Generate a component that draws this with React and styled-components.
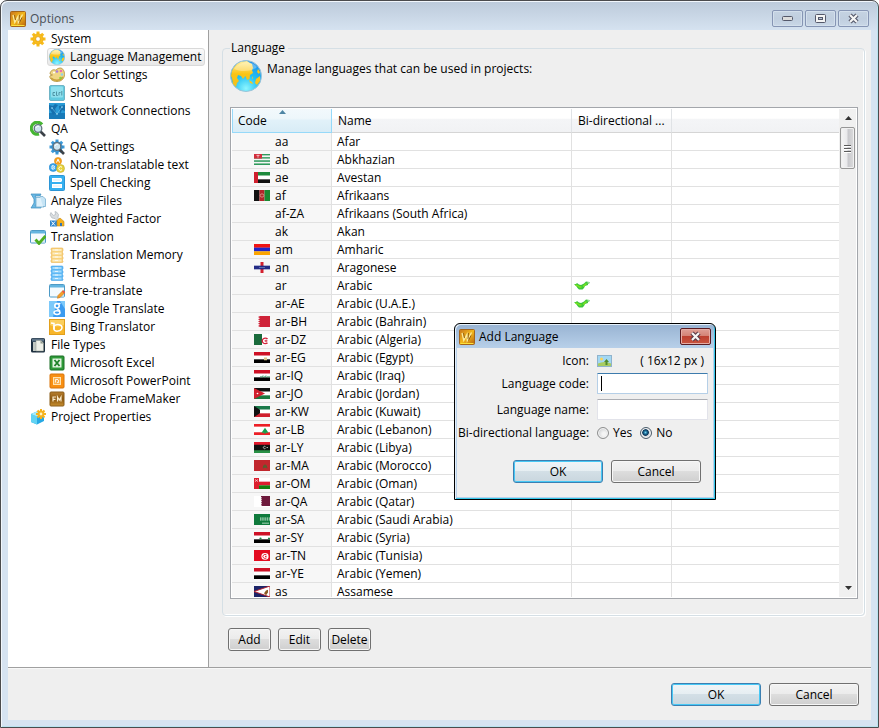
import React from 'react';
import styled, { createGlobalStyle, css } from 'styled-components';

const GlobalStyle = createGlobalStyle`
  *, *::before, *::after { box-sizing: border-box; }
  html, body, #root { height: 100%; margin: 0; }
  body { background: #ffffff; }
  body, button, input, table { font-family: "Open Sans", "Noto Sans", sans-serif; font-size: 12px; line-height: 16px; color: #000000; }
`;

/* ---------- window ---------- */

const Window = styled.div`
  display: flex;
  flex-direction: column;
  height: 100vh;
  min-height: 728px;
  padding: 0 7px 7px;
  border: 1px solid #4b4b4d;
  border-radius: 7px 7px 0 0;
  background: linear-gradient(#bccada 0, #d6e3f1 30px, #d6e3f1 100%);
  box-shadow: inset 1px 1px 0 #f2f7fc, inset -1px -1px 0 #b9e3ef;
`;

const TitleBar = styled.header`
  display: flex;
  align-items: center;
  gap: 4px;
  flex: none;
  height: 29px;
  padding: 6px 0 0 2px;
`;

const WindowTitle = styled.h1`
  flex: 1;
  margin: 0;
  font-size: 12px;
  font-weight: 400;
  color: #4a5158;
`;

const CaptionButtons = styled.div`
  display: flex;
  gap: 2px;
  align-items: center;
  padding-right: 2px;
`;

const CaptionButton = styled.button`
  display: flex;
  align-items: center;
  justify-content: center;
  width: 31px;
  height: 17px;
  padding: 0;
  border: 1px solid #8695b4;
  border-radius: 2px;
  background: linear-gradient(#c5d3e2, #c0cedf 50%, #c9d7e6);
  box-shadow: inset 0 0 0 1px #d3dfec;
`;

const Client = styled.div`
  display: flex;
  flex-direction: column;
  flex: 1;
  min-height: 0;
  background: #efefef;
`;

const Workspace = styled.div`
  display: flex;
  flex: 1;
  min-height: 0;
  border-bottom: 1px solid #a0a0a0;
`;

/* ---------- tree ---------- */

const Sidebar = styled.nav`
  flex: none;
  width: 201px;
  border-right: 1px solid #a0a0a0;
  background: #ffffff;
`;

const Tree = styled.ul`
  margin: 0;
  padding: 0;
  list-style: none;
`;

const TreeItem = styled.li`
  display: flex;
  padding-left: ${(p) => (p.$level ? 39 : 20)}px;
`;

const TreeLink = styled.a`
  display: flex;
  align-items: center;
  gap: 5px;
  height: 18px;
  padding: 0 3px 0 1px;
  border: 1px solid transparent;
  border-radius: 3px;
  color: #000000;
  text-decoration: none;
  white-space: nowrap;
  ${(p) => p.$selected && css`
    border-color: #d9d9d9;
    background: linear-gradient(#fafafa, #e8e8e8);
  `}
`;

/* ---------- main panel ---------- */

const Main = styled.main`
  display: flex;
  flex-direction: column;
  flex: 1;
  min-width: 0;
  padding: 10px 6px 16px 13px;
`;

const Group = styled.fieldset`
  display: flex;
  flex-direction: column;
  flex: 1;
  min-height: 0;
  min-width: 0;
  margin: 0;
  padding: 4px 6px 16px 7px;
  border: 1px solid #d5dfe5;
  border-radius: 4px;
  box-shadow: inset -1px -1px 0 #ffffff, 1px 1px 0 #ffffff;
`;

const Legend = styled.legend`
  height: 16px;
  padding: 0 3px 0 1px;
`;

const Intro = styled.div`
  display: flex;
  gap: 5px;
  height: 47px;
`;

const IntroText = styled.p`
  margin: 1px 0 0;
`;

const ListFrame = styled.div`
  display: flex;
  flex: 1;
  min-height: 0;
  padding: 1px;
  border: 1px solid #a3a6ab;
  background: #ffffff;
`;

const ListScroll = styled.div`
  flex: 1;
  min-width: 0;
  overflow: hidden;
`;

const Table = styled.table`
  width: 100%;
  table-layout: fixed;
  border-collapse: separate;
  border-spacing: 0;
`;

const Col = styled.col`
  width: ${(p) => p.$width || 'auto'};
`;

const HeadCell = styled.th`
  position: relative;
  height: 24px;
  padding: 0 6px;
  border-right: 1px solid #e0e3e6;
  border-bottom: 1px solid #d5d5d5;
  background: linear-gradient(#ffffff 0, #ffffff 40%, #f4f5f7 45%, #f1f2f4 100%);
  font-weight: 400;
  text-align: left;
  white-space: nowrap;
  overflow: hidden;
  ${(p) => p.$sorted && css`
    border: 1px solid #96d9f9;
    border-top: 0;
    padding-left: 5px;
    background: linear-gradient(#f2f9fc 0, #eef7fb 40%, #e1f1f9 50%, #d8ecf6 100%);
  `}
  ${(p) => p.$last && css`border-right: 0;`}
`;

const SortArrow = styled.svg`
  position: absolute;
  top: 1px;
  left: calc(50% - 3px);
`;

const Cell = styled.td`
  height: 18px;
  padding: 0 5px;
  border-right: 1px solid #e1e1e1;
  border-bottom: 1px solid #e1e1e1;
  line-height: 14px;
  white-space: nowrap;
  ${(p) => p.$last && css`border-right: 0;`}
`;

const CodeCell = styled(Cell)`
  background: #f7f7f7;
  padding: 0 0 0 22px;
`;

const FlagCell = styled(Cell)`
  padding: 0 2px;
`;

const CodeContent = styled.div`
  display: grid;
  grid-template-columns: 16px 1fr;
  gap: 5px;
  align-items: center;
  height: 17px;
`;

const CheckBox = styled.div`
  display: flex;
  align-items: center;
  height: 17px;
`;

const ScrollBar = styled.div`
  display: flex;
  flex-direction: column;
  flex: none;
  width: 17px;
  padding-left: 1px;
  background: #f0f0f0;
`;

const ScrollArrow = styled.button`
  display: flex;
  align-items: center;
  justify-content: center;
  flex: none;
  height: 18px;
  padding: 0;
  border: 0;
  background: transparent;
`;

const ScrollTrack = styled.div`
  flex: 1;
`;

const ScrollThumb = styled.div`
  display: flex;
  align-items: center;
  justify-content: center;
  width: 15px;
  height: 42px;
  border: 1px solid #979797;
  border-radius: 2px;
  background: linear-gradient(90deg, #f5f5f5 0, #e9e9eb 45%, #c8c8cc 55%, #dcdcdd 100%);
  box-shadow: inset 0 0 0 1px #f0f0f0;
`;

/* ---------- buttons ---------- */

const Button = styled.button`
  flex: none;
  width: ${(p) => (p.$small ? 43 : 90)}px;
  height: 23px;
  padding: 0;
  border: 1px solid #707070;
  border-radius: 3px;
  background: linear-gradient(#f2f2f2 0, #ebebeb 48%, #dddddd 50%, #cfcfcf 100%);
  box-shadow: inset 0 0 0 1px #f7f7f7;
  white-space: nowrap;
  ${(p) => p.$primary && css`
    border-color: #3c7fb1;
    background: linear-gradient(#f0f4f7 0, #e6eef2 48%, #d3dfe6 50%, #c9d6de 100%);
    box-shadow: inset 0 0 0 1px #47c8f5;
  `}
`;

const Actions = styled.div`
  display: flex;
  gap: 7px;
  padding: 12px 0 0 6px;
`;

const Footer = styled.footer`
  display: flex;
  justify-content: flex-end;
  gap: 8px;
  flex: none;
  padding: 14px 12px;
  border-top: 1px solid #f8f8f8;
`;

/* ---------- dialog ---------- */

const Dialog = styled.section`
  position: absolute;
  top: 323px;
  left: 454px;
  width: 262px;
  padding: 1px 2px 2px;
  border: 1px solid #000000;
  border-radius: 6px 6px 0 0;
  background: linear-gradient(#98b3d2 0, #b9d1ea 25px, #b9d1ea 100%);
  box-shadow: inset 1px 1px 0 #e5f0fa, inset -1px -1px 0 #35c8ea;
`;

const DialogTitleBar = styled.header`
  display: flex;
  align-items: center;
  gap: 4px;
  height: 23px;
  padding: 0 2px;
`;

const DialogTitle = styled.h2`
  flex: 1;
  margin: 0;
  font-size: 12px;
  font-weight: 400;
`;

const DialogClose = styled.button`
  display: flex;
  align-items: center;
  justify-content: center;
  width: 31px;
  height: 17px;
  padding: 0;
  border: 1px solid #5b1c22;
  border-radius: 2px;
  background: linear-gradient(#dfa097 0, #d48376 45%, #bd4131 50%, #c9543f 100%);
  box-shadow: inset 0 0 0 1px #e5aca4;
`;

const DialogBody = styled.form`
  padding: 4px 5px 14px 1px;
  background: #efefef;
`;

const Fields = styled.div`
  display: grid;
  grid-template-columns: 131px 1fr;
  grid-template-rows: 18px 27px 25px 22px;
  column-gap: 8px;
  align-items: center;
`;

const FieldLabel = styled.label`
  text-align: right;
  white-space: nowrap;
`;

const IconRow = styled.div`
  display: flex;
  align-items: center;
  justify-content: space-between;
  padding-right: 4px;
`;

const IconPicker = styled.button`
  display: flex;
  padding: 0;
  border: 0;
  background: transparent;
`;

const TextInput = styled.input`
  width: 100%;
  height: 21px;
  padding: 1px 3px;
  border: 1px solid #e2e3ea;
  border-top-color: #abadb3;
  border-radius: 1px;
  background: #ffffff;
  outline: 0;
  caret-color: transparent;
`;

const InputBox = styled.div`
  display: grid;
  align-items: center;
  > * { grid-area: 1 / 1; }
  ${(p) => p.$focused && css`
    ${TextInput} {
      border-color: #b5cfe7;
      border-top-color: #3d7bad;
    }
  `}
`;

const Caret = styled.span`
  z-index: 1;
  width: 1px;
  height: 15px;
  margin-left: 4px;
  background: #000000;
`;

const RadioRow = styled.div`
  display: flex;
  gap: 8px;
`;

const RadioLabel = styled.label`
  display: flex;
  align-items: center;
  gap: 4px;
`;

const Radio = styled.input`
  appearance: none;
  width: 12px;
  height: 12px;
  margin: 0;
  border: 1px solid #8e8f8f;
  border-radius: 50%;
  background: radial-gradient(circle at 60% 60%, #f4f4f4 20%, #cfd1d3 75%);
  box-shadow: inset 0 0 0 1px #f4f4f4;
  &:checked {
    border-color: #4b5c6b;
    background: radial-gradient(circle at 45% 45%, #6fd0ee 0, #17648f 22%, #0b3557 38%, #d8dde2 48%);
  }
`;

const DialogActions = styled.div`
  display: flex;
  justify-content: flex-end;
  gap: 8px;
  padding: 16px 7px 0 0;
`;

/* ---------- icons ---------- */

const Svg16 = ({ children, size = 16 }) => (
  <svg width={size} height={size} viewBox="0 0 16 16" aria-hidden="true">{children}</svg>
);

const AppIcon = () => (
  <Svg16>
    <defs>
      <linearGradient id="app-g" x1="0" y1="0" x2="1" y2="1">
        <stop offset="0" stopColor="#c8741c" /><stop offset=".5" stopColor="#f2b81c" /><stop offset="1" stopColor="#b8620e" />
      </linearGradient>
    </defs>
    <rect x=".5" y=".5" width="15" height="15" rx="1" fill="url(#app-g)" stroke="#a5651a" />
    <path d="M1.500 14.500h13" stroke="#fbe23c" />
    <path d="M3 4l1.800 7.500L8 5.500l.300 6L12.500 3.500" fill="none" stroke="#fbe9a0" strokeWidth="1.300" />
    <path d="M4.500 4l1 5M9.500 4l-.5 6M12 6.500l-2.500 5" fill="none" stroke="#8c5a14" strokeWidth=".9" />
  </Svg16>
);

const Globe = ({ size = 16 }) => (
  <svg width={size} height={size} viewBox="0 0 32 32" aria-hidden="true">
    <defs>
      <radialGradient id="globe-g" cx=".5" cy=".9" r=".95">
        <stop offset="0" stopColor="#8df6ff" /><stop offset=".45" stopColor="#22c0f2" /><stop offset="1" stopColor="#1b86ea" />
      </radialGradient>
      <linearGradient id="land-g" x1="0" y1="0" x2="0" y2="1">
        <stop offset="0" stopColor="#fff0a0" /><stop offset=".5" stopColor="#fbc414" /><stop offset="1" stopColor="#f0c020" />
      </linearGradient>
    </defs>
    <circle cx="16" cy="16" r="15.500" fill="url(#globe-g)" stroke="#9cc3d8" />
    <path d="M2 11C4 6 8 2 13 1.500l4-.5 3 2 2 1 1 4-1 2 1 3-3 2-.5 4L17 20l-1.500-4L13 19l-2-3-3-1-1 3 2 3-2 2-1 4-3-3-1-6-1-2z" fill="url(#land-g)" />
    <path d="M26 19l4-3v5l-3 4-2-2zM19 20l3 2 1 2-3-1zM28 9l2 3-1 2-2-2zM22 16l1 2-1 1z" fill="#fbc51a" />
    <path d="M4 9C9 1 22 0 27 7 22 12 10 12 4 9z" fill="#fff" opacity=".3" />
  </svg>
);

const Gear = ({ fill, stroke, hole }) => (
  <>
    <g stroke={fill} strokeWidth="3">
      <path d="M8 .5v15M.5 8h15M2.800 2.800l10.400 10.400M13.200 2.800L2.800 13.200" />
    </g>
    <circle cx="8" cy="8" r="5.300" fill={fill} stroke={stroke} strokeWidth=".4" />
    <circle cx="8" cy="8" r="2.400" fill={hole} stroke={stroke} strokeWidth=".8" />
  </>
);

const Magnifier = () => (
  <>
    <path d="M10.500 10.500l4.500 4.500" stroke="#3b4148" strokeWidth="2.600" />
    <circle cx="8" cy="7.500" r="3.800" fill="#cfe5f0" stroke="#62717c" strokeWidth="1.300" />
    <path d="M6 7a2.400 2.400 0 0 1 3-1.800" fill="none" stroke="#fff" />
  </>
);

const Database = ({ light, mid, dark }) => (
  <Svg16>
    <path d="M2.500 1h11l.5 1v2l-1 1 1 1v2l-1 1 1 1v2l-1 1 1 1v1l-.5.500h-11L2 15v-2l1-1-1-1V9l1-1-1-1V5l1-1-1-1V2z" fill={mid} stroke={dark} strokeWidth=".6" />
    <path d="M3.500 3h9M3.500 6.500h9M3.500 10h9M3.500 13.500h9" stroke={light} strokeWidth="1.800" />
    <path d="M6 3h3M6 6.500h3M6 10h3M6 13.500h3" stroke="#fff" opacity=".7" />
  </Svg16>
);

const AppWindow = () => (
  <>
    <rect x=".5" y="1.500" width="15" height="12.500" rx="1" fill="#f4fafe" stroke="#4d9ac6" />
    <path d="M1 2h14v2.500H1z" fill="#63b5e0" />
    <path d="M3 13h10l2-6v6.500z" fill="#cfe8f6" />
  </>
);

const icons = {
  system: (
    <Svg16><Gear fill="#f8bd1c" stroke="#e39c0c" hole="#ffffff" /></Svg16>
  ),
  globe: <Globe />,
  palette: (
    <Svg16>
      <path d="M1 7c0-3 3-5 5-4 1 1 2-2 5-2 3 0 4.500 3 4.500 6.500 0 4-3 7-7.500 7S1 12 .8 9.500C.7 8 3 9 3.500 8z" fill="#f0d684" stroke="#b08d35" strokeWidth=".8" />
      <path d="M2 11c3 3 9 3.500 12-1" fill="none" stroke="#c9a23c" strokeWidth="1.500" />
      <circle cx="8" cy="4.500" r="1.300" fill="#a77ad8" /><circle cx="12" cy="4" r="1.300" fill="#ee6fae" />
      <circle cx="13" cy="7.500" r="1.300" fill="#8fd0e8" /><circle cx="11.500" cy="11" r="1.300" fill="#8bd03c" /><circle cx="5" cy="5.500" r="1" fill="#fff" />
    </Svg16>
  ),
  shortcuts: (
    <Svg16>
      <rect x=".5" y=".5" width="15" height="15" rx="1.500" fill="#62cbe0" stroke="#6fb4c6" />
      <rect x="2" y="1.500" width="12" height="11" rx="1" fill="#8fe0ee" />
      <path d="M6 7.500H4v3h2M7.500 6.500v4h1.300M10 10.500v-3h1.500M12.800 6v4.500" fill="none" stroke="#4f95a6" strokeWidth="1" />
    </Svg16>
  ),
  network: (
    <Svg16>
      <rect width="16" height="16" fill="#2a9bd6" />
      <path d="M0 10h16v6H0z" fill="#187ab8" />
      <path d="M0 2l4 1 2-2 3 1-3 4 1 3-3 3-2-4-2-2zM10 3l6-1v6l-3-1-2 4z" fill="#1670ae" />
      <path d="M3 5l5 6 5-7" fill="none" stroke="#6cc4ec" strokeWidth=".6" />
      <circle cx="3" cy="5" r=".8" fill="#aee9fa" /><circle cx="8" cy="11" r=".8" fill="#aee9fa" /><circle cx="13" cy="4" r=".8" fill="#aee9fa" />
    </Svg16>
  ),
  qa: (
    <Svg16>
      <path d="M12 3.500A6 6 0 1 0 9 13" fill="none" stroke="#46b534" strokeWidth="3.200" />
      <Magnifier />
    </Svg16>
  ),
  qaSettings: (
    <Svg16><Gear fill="#3d9ad8" stroke="#2475b4" hole="#bfe2f3" /><Magnifier /></Svg16>
  ),
  nonTranslatable: (
    <Svg16>
      <circle cx="9" cy="4" r="3.600" fill="#f9a11c" stroke="#d9820c" strokeWidth=".5" />
      <circle cx="4.200" cy="10.500" r="4" fill="#39a5ea" stroke="#1b7fc6" strokeWidth=".5" />
      <circle cx="11.500" cy="11.500" r="4" fill="#e6d23c" stroke="#b5a225" strokeWidth=".5" />
      <path d="M7.500 5.500L9 2.200l1.500 3.300M3 12V8.800h1.500c1.500 0 1 1.400 0 1.500 1.500.1 1.600 1.700 0 1.700zM13 10.300a1.800 1.800 0 1 0 0 2.400" fill="none" stroke="#fff" />
    </Svg16>
  ),
  spell: (
    <Svg16>
      <rect x=".5" y=".5" width="15" height="15" rx="1" fill="#35b0f0" stroke="#2b95d6" />
      <path d="M3 3h9l1 1v2l-1 1H3zM3 9h10v4H3z" fill="#fff" />
      <path d="M4 5h8M4 11h8" stroke="#d4edfa" />
    </Svg16>
  ),
  analyze: (
    <Svg16>
      <path d="M1 1h10l-1 2H5l2 3v4l-2 3h6v2H1l3-5V6z" fill="#6bb9e4" stroke="#3a8abb" strokeWidth=".7" />
      <path d="M6 4.500h5l3 2.500v7H6z" fill="#dff1fb" stroke="#74aed0" strokeWidth=".8" />
      <path d="M10 3.500h3l2.500 2.500v7.500H13" fill="#c6e4f5" stroke="#6aa8cc" strokeWidth=".7" />
    </Svg16>
  ),
  weighted: (
    <Svg16>
      <path d="M2 1.500L1 4l2 3 3 .5 5 5 2-2-4-4 .5-3L7.500 1 6 .500l.5 3-2 .8L3 3z" fill="#d9dde0" stroke="#a5adb3" strokeWidth=".6" />
      <path d="M1 9.500h7v6H1z" fill="#2f87cf" /><path d="M2.500 10.500l3.500 4M6 10.500l-3.500 4" stroke="#fff" />
      <path d="M8 15V9.500l3-2.500 4 3.500V15z" fill="#f6b21c" stroke="#c98a10" strokeWidth=".6" /><path d="M11 12h2v3h-2z" fill="#2f74b5" />
    </Svg16>
  ),
  translation: (
    <Svg16><AppWindow /><path d="M5.500 10.500l3.500 4 6.500-7.500" fill="none" stroke="#4faf22" strokeWidth="2.800" /></Svg16>
  ),
  memory: <Database light="#fdebbd" mid="#f8d27c" dark="#ecb655" />,
  termbase: <Database light="#a3dafc" mid="#5db8f5" dark="#4aa6ea" />,
  pretranslate: (
    <Svg16>
      <AppWindow />
      <path d="M9 12.500l5-5 2 2-5 5-2.500.800z" fill="#f6a02c" stroke="#c97512" strokeWidth=".6" /><path d="M13 8.500l1.200-1.300 2 2L15 10.500z" fill="#e2574a" />
    </Svg16>
  ),
  google: (
    <Svg16>
      <rect width="16" height="16" fill="#3b9bf0" /><path d="M0 0h8L4 16H0zM11 0h5v8z" fill="#7cc9fa" />
      <path d="M11.500 2.500H8.500" stroke="#fff" strokeWidth="1.300" />
      <ellipse cx="8" cy="4.800" rx="2.200" ry="2.200" fill="none" stroke="#fff" strokeWidth="1.600" />
      <path d="M8 7.500l3 2.500" stroke="#fff" strokeWidth="1.600" />
      <ellipse cx="8" cy="11.600" rx="3" ry="1.900" fill="none" stroke="#fff" strokeWidth="1.500" />
    </Svg16>
  ),
  bing: (
    <Svg16>
      <rect x=".5" y=".5" width="15" height="15" fill="#f8b62a" stroke="#e2a01c" />
      <path d="M1 1h14v5C10 8 5 8 1 6z" fill="#fbcf5e" />
      <path d="M2 4l3 .5v6" fill="none" stroke="#fff" strokeWidth="1.500" />
      <path d="M5 7c3-2.500 8-1.500 8 1.500 0 4-8 5-8 1.500z" fill="none" stroke="#fff" strokeWidth="1.500" />
    </Svg16>
  ),
  fileTypes: (
    <Svg16>
      <rect x="1" y="1" width="14" height="14.500" rx="1.500" fill="#1d2f3f" />
      <path d="M2 1.500h12v3H2z" fill="#5d7387" />
      <path d="M3 5h4v9H3z" fill="#c2c9c3" /><path d="M6 3.500h5l2.500 2.500v8H6z" fill="#eef0e8" stroke="#8c948c" strokeWidth=".5" /><path d="M10.500 3.500V6.500h3z" fill="#8d978c" />
    </Svg16>
  ),
  excel: (
    <Svg16>
      <rect x="1" y="1" width="14" height="14" rx="1" fill="#2f9a39" stroke="#1c6f27" />
      <rect x="3.500" y="3.500" width="9" height="9" fill="#e4f4e2" /><path d="M5.500 5l5 6M10.500 5l-5 6" stroke="#1f8229" strokeWidth="1.900" />
    </Svg16>
  ),
  powerpoint: (
    <Svg16>
      <rect x="1" y="1" width="14" height="14" rx="1" fill="#f88f12" stroke="#d8740a" />
      <rect x="4.500" y="4.500" width="7" height="7" fill="#fbb150" stroke="#ffe3b0" /><path d="M6.500 9.500v-3H9M9.500 7v2.500H8" fill="none" stroke="#fff" strokeWidth=".8" />
    </Svg16>
  ),
  framemaker: (
    <Svg16>
      <defs>
        <linearGradient id="fm-g" x1="0" y1="0" x2="0" y2="1">
          <stop offset="0" stopColor="#b9802f" /><stop offset=".5" stopColor="#8a560f" /><stop offset="1" stopColor="#c99030" />
        </linearGradient>
      </defs>
      <rect x="1" y="1" width="14" height="14" rx="1" fill="url(#fm-g)" stroke="#8a5c18" />
      <path d="M4 10.500V6h3M4 8.300h2.500M8.500 10.500V6l1.800 3L12 6v4.500" fill="none" stroke="#fbeccb" strokeWidth="1.200" />
    </Svg16>
  ),
  project: (
    <Svg16>
      <path d="M1 5l7-3 6 3v7l-7 3.500L1 13z" fill="#27a9e4" /><path d="M1 5l6 2.500v8L1 13z" fill="#62d3f3" /><path d="M1 5l7-3 6 3-7 2.500z" fill="#a6ecfb" />
      <g stroke="#f6b21c" strokeWidth="2"><path d="M11 0v10M6 5h10M7.500 1.500l7 7M14.500 1.500l-7 7" /></g>
      <circle cx="11" cy="5" r="3.400" fill="#f6b21c" /><circle cx="11" cy="5" r="1.400" fill="#fff3c4" />
    </Svg16>
  ),
};

const Check = () => (
  <svg width="16" height="9" viewBox="0 0 16 9" role="img" aria-label="Yes">
    <path d="M0 3h2l1-1 2 1.500 2 .5 3-1.500L12 .500l3.500.500v1L14 3v1l-3 1-1 2-1.500 1.500H5L3.500 7 2.500 5.500z" fill="#3cc73c" />
    <path d="M1.500 4l2 .5 2 1.500h2M9 5.500l3.500-3" fill="none" stroke="#7fe31c" strokeWidth="1.300" />
    <path d="M13.500 1h2v1.500h-2z" fill="#9adf9b" />
  </svg>
);

/* ---------- flags ---------- */

const Bands = ({ colors }) => colors.map((c, i) => (
  <rect key={i} y={(12 / colors.length) * i} width="16" height={12 / colors.length + 0.1} fill={c} />
));

const flags = {
  ab: <><Bands colors={['#2f9a5c', '#f4f4f4', '#2f9a5c', '#f4f4f4', '#2f9a5c', '#f4f4f4', '#2f9a5c']} /><rect width="8" height="5" fill="#d22d3c" /><path d="M4 1v3M2.500 1.500h3" stroke="#f3b9be" /></>,
  ae: <><Bands colors={['#1d8a3c', '#ffffff', '#111111']} /><rect width="4" height="12" fill="#d0202e" /></>,
  af: <><rect width="5.500" height="12" fill="#111" /><rect x="5.500" width="5" height="12" fill="#b4252b" /><rect x="10.500" width="5.500" height="12" fill="#1a8a32" /><circle cx="8" cy="6" r="1.800" fill="none" stroke="#d98f80" /></>,
  am: <Bands colors={['#f01414', '#2026c8', '#fba400']} />,
  an: <><rect width="16" height="12" fill="#f6f6f6" /><rect x="6.500" width="3" height="12" fill="#d4202e" /><rect y="4" width="16" height="4" fill="#232c86" /><path d="M5.500 6h5" stroke="#aab0d8" strokeDasharray="1 1" /></>,
  bh: <><rect width="16" height="12" fill="#f8f8f8" /><path d="M6 0h10v12H6L4 10.800 6 9.600 4 8.400 6 7.200 4 6l2-1.200L4 3.600l2-1.200L4 1.200z" fill="#cf2339" /></>,
  dz: <><rect width="8" height="12" fill="#1a6b3c" /><rect x="8" width="8" height="12" fill="#fff" /><path d="M13.500 5.500a3 3 0 1 0 0 4" fill="none" stroke="#d3233a" strokeWidth="1.400" /><path d="M10.500 7.500h3M12 6.300v2.600" stroke="#d3233a" /></>,
  eg: <><Bands colors={['#ce1126', '#ffffff', '#000000']} /><rect x="10" y="6" width="3" height="3" fill="#dcc68c" /></>,
  iq: <><Bands colors={['#ce1126', '#ffffff', '#000000']} /><path d="M6 7.500h3V6M10 7.500h2V6M13 7.500h3" fill="none" stroke="#3c9a6a" /></>,
  jo: <><Bands colors={['#111111', '#ffffff', '#1a7a40']} /><path d="M0 0l11 6L0 12z" fill="#d0202e" /><circle cx="3.500" cy="6" r=".9" fill="#fff" /></>,
  kw: <><Bands colors={['#1a7a4a', '#ffffff', '#d0202e']} /><path d="M0 0l6 4v4l-6 4z" fill="#111" /></>,
  lb: <><Bands colors={['#ec2027', '#ffffff', '#ffffff', '#ec2027']} /><path d="M11 4l3.500 5.500h-3V11h-1V9.500h-3z" fill="#14a04e" /></>,
  ly: <><rect width="16" height="12" fill="#111" /><rect width="16" height="3" fill="#e3182c" /><rect y="9" width="16" height="3" fill="#279045" /><path d="M11.500 5a1.300 1.300 0 1 0 0 2M12.500 6h1.500" fill="none" stroke="#ddd" strokeWidth=".8" /></>,
  ma: <><rect width="16" height="12" fill="#c1272d" /><path d="M11 5l2.200 3.800L9 6.600h4L9 8.800z" fill="none" stroke="#53622f" strokeWidth=".9" /></>,
  om: <><Bands colors={['#ffffff', '#dc1e2d', '#12800e']} /><rect width="5" height="12" fill="#dc1e2d" /><path d="M1 1.500l3 2.500M4 1.500L1 4" stroke="#f6c9cc" strokeWidth=".8" /></>,
  qa: <><rect width="16" height="12" fill="#fff" /><path d="M7 0h9v11H7l1-1-1-1 1-1-1-1 1-1-1-1 1-1-1-1 1-1-1-1z" fill="#6e1a3c" /></>,
  sa: <><rect width="16" height="12" fill="#0f7a3c" /><path d="M6 4.500h10M6 6.500h10" stroke="#b6dcc4" strokeWidth="1.300" strokeDasharray="1.500 .7" /><path d="M8 10h7" stroke="#d8eedf" strokeWidth=".8" /></>,
  sy: <><Bands colors={['#ce1126', '#ffffff', '#000000']} /><circle cx="6.500" cy="7" r="1.100" fill="#1f8548" /><circle cx="15" cy="7" r="1.100" fill="#1f8548" /></>,
  tn: <><rect width="16" height="12" fill="#e30b20" /><circle cx="11" cy="7" r="3.600" fill="#fff" /><path d="M12.500 5.300a2.200 2.200 0 1 0 0 3.400" fill="none" stroke="#e30b20" strokeWidth=".9" /><circle cx="11.800" cy="7" r=".8" fill="#e30b20" /></>,
  ye: <Bands colors={['#ce1126', '#ffffff', '#000000']} />,
  as: <><rect width="16" height="12" fill="#1c2468" /><path d="M16 0L0 6l16 6z" fill="#fff" stroke="#b8202c" /><path d="M10 8l2-3 2-1v3l-2 3z" fill="#8a5a22" /></>,
};

const Flag = ({ id }) => (
  <svg width="16" height="11" viewBox="0 0 16 12" preserveAspectRatio="none" aria-hidden="true">{flags[id]}</svg>
);

/* ---------- data ---------- */

const tree = [
  ['system', 'System', 0],
  ['globe', 'Language Management', 1],
  ['palette', 'Color Settings', 1],
  ['shortcuts', 'Shortcuts', 1],
  ['network', 'Network Connections', 1],
  ['qa', 'QA', 0],
  ['qaSettings', 'QA Settings', 1],
  ['nonTranslatable', 'Non-translatable text', 1],
  ['spell', 'Spell Checking', 1],
  ['analyze', 'Analyze Files', 0],
  ['weighted', 'Weighted Factor', 1],
  ['translation', 'Translation', 0],
  ['memory', 'Translation Memory', 1],
  ['termbase', 'Termbase', 1],
  ['pretranslate', 'Pre-translate', 1],
  ['google', 'Google Translate', 1],
  ['bing', 'Bing Translator', 1],
  ['fileTypes', 'File Types', 0],
  ['excel', 'Microsoft Excel', 1],
  ['powerpoint', 'Microsoft PowerPoint', 1],
  ['framemaker', 'Adobe FrameMaker', 1],
  ['project', 'Project Properties', 0],
];

const languages = [
  ['aa', 'Afar'],
  ['ab', 'Abkhazian', 'ab'],
  ['ae', 'Avestan', 'ae'],
  ['af', 'Afrikaans', 'af'],
  ['af-ZA', 'Afrikaans (South Africa)'],
  ['ak', 'Akan'],
  ['am', 'Amharic', 'am'],
  ['an', 'Aragonese', 'an'],
  ['ar', 'Arabic', null, true],
  ['ar-AE', 'Arabic (U.A.E.)', null, true],
  ['ar-BH', 'Arabic (Bahrain)', 'bh'],
  ['ar-DZ', 'Arabic (Algeria)', 'dz'],
  ['ar-EG', 'Arabic (Egypt)', 'eg'],
  ['ar-IQ', 'Arabic (Iraq)', 'iq'],
  ['ar-JO', 'Arabic (Jordan)', 'jo'],
  ['ar-KW', 'Arabic (Kuwait)', 'kw'],
  ['ar-LB', 'Arabic (Lebanon)', 'lb'],
  ['ar-LY', 'Arabic (Libya)', 'ly'],
  ['ar-MA', 'Arabic (Morocco)', 'ma'],
  ['ar-OM', 'Arabic (Oman)', 'om'],
  ['ar-QA', 'Arabic (Qatar)', 'qa'],
  ['ar-SA', 'Arabic (Saudi Arabia)', 'sa'],
  ['ar-SY', 'Arabic (Syria)', 'sy'],
  ['ar-TN', 'Arabic (Tunisia)', 'tn'],
  ['ar-YE', 'Arabic (Yemen)', 'ye'],
  ['as', 'Assamese', 'as'],
];

const CloseGlyph = ({ edge }) => (
  <svg width="13" height="11" viewBox="0 0 13 11" aria-hidden="true">
    <path d="M3 2l7 7M10 2L3 9" stroke={edge} strokeWidth="4.400" />
    <path d="M3 2l7 7M10 2L3 9" stroke="#f5f5f5" strokeWidth="2.200" />
  </svg>
);

function LanguageTable() {
  return (
    <ListFrame>
      <ListScroll>
        <Table>
          <colgroup>
            <Col $width="100px" /><Col $width="240px" /><Col $width="100px" /><Col />
          </colgroup>
          <thead>
            <tr>
              <HeadCell $sorted aria-sort="ascending">
                Code
                <SortArrow width="7" height="4" viewBox="0 0 7 4" aria-hidden="true"><path d="M0 4l3.500-4L7 4z" fill="#4f86a4" /></SortArrow>
              </HeadCell>
              <HeadCell>Name</HeadCell>
              <HeadCell>Bi-directional ...</HeadCell>
              <HeadCell $last />
            </tr>
          </thead>
          <tbody>
            {languages.map(([code, name, flag, bidi]) => (
              <tr key={code}>
                <CodeCell>
                  <CodeContent>
                    {flag ? <Flag id={flag} /> : <span />}
                    <span>{code}</span>
                  </CodeContent>
                </CodeCell>
                <Cell>{name}</Cell>
                <FlagCell>{bidi && <CheckBox><Check /></CheckBox>}</FlagCell>
                <Cell $last />
              </tr>
            ))}
          </tbody>
        </Table>
      </ListScroll>
      <ScrollBar>
        <ScrollArrow type="button" aria-label="Scroll up">
          <svg width="7" height="4" viewBox="0 0 7 4"><path d="M0 4l3.500-4L7 4z" fill="#333" /></svg>
        </ScrollArrow>
        <ScrollTrack>
          <ScrollThumb>
            <svg width="8" height="9" viewBox="0 0 8 9" shapeRendering="crispEdges"><path d="M0 1.500h7M0 4.500h7M0 7.500h7" stroke="#5a5a5a" /><path d="M0 2.500h7M0 5.500h7M0 8.500h7" stroke="#fff" /></svg>
          </ScrollThumb>
        </ScrollTrack>
        <ScrollArrow type="button" aria-label="Scroll down">
          <svg width="7" height="4" viewBox="0 0 7 4"><path d="M0 0l3.500 4L7 0z" fill="#333" /></svg>
        </ScrollArrow>
      </ScrollBar>
    </ListFrame>
  );
}

function AddLanguageDialog() {
  return (
    <Dialog role="dialog" aria-labelledby="add-language-title">
      <DialogTitleBar>
        <AppIcon />
        <DialogTitle id="add-language-title">Add Language</DialogTitle>
        <DialogClose type="button" aria-label="Close"><CloseGlyph edge="#5a3a48" /></DialogClose>
      </DialogTitleBar>
      <DialogBody onSubmit={(e) => e.preventDefault()}>
        <Fields>
          <FieldLabel htmlFor="lang-icon">Icon:</FieldLabel>
          <IconRow>
            <IconPicker id="lang-icon" type="button" aria-label="Choose icon">
              <svg width="15" height="12" viewBox="0 0 15 12">
                <rect x=".5" y=".5" width="14" height="11" fill="#a3d8f3" stroke="#8fb3cd" />
                <path d="M1 8.500c4-2 8-2 13 0V11H1z" fill="#a8cc62" />
                <circle cx="4.500" cy="4" r="1.500" fill="#fbd35a" />
                <path d="M9.500 4l2.500 3h-1.500v3h-2V7H7z" fill="#4f8a2e" />
              </svg>
            </IconPicker>
            <span>( 16x12 px )</span>
          </IconRow>
          <FieldLabel htmlFor="lang-code">Language code:</FieldLabel>
          <InputBox $focused><TextInput id="lang-code" type="text" /><Caret /></InputBox>
          <FieldLabel htmlFor="lang-name">Language name:</FieldLabel>
          <InputBox><TextInput id="lang-name" type="text" /></InputBox>
          <FieldLabel as="span" id="bidi-label">Bi-directional language:</FieldLabel>
          <RadioRow role="radiogroup" aria-labelledby="bidi-label">
            <RadioLabel><Radio type="radio" name="bidi" value="yes" />Yes</RadioLabel>
            <RadioLabel><Radio type="radio" name="bidi" value="no" defaultChecked />No</RadioLabel>
          </RadioRow>
        </Fields>
        <DialogActions>
          <Button type="submit" $primary>OK</Button>
          <Button type="button">Cancel</Button>
        </DialogActions>
      </DialogBody>
    </Dialog>
  );
}

export default function App() {
  return (
    <>
      <GlobalStyle />
      <Window>
        <TitleBar>
          <AppIcon />
          <WindowTitle>Options</WindowTitle>
          <CaptionButtons>
            <CaptionButton type="button" aria-label="Minimize">
              <svg width="12" height="6" viewBox="0 0 12 6"><rect x=".5" y=".5" width="10" height="4" rx="1" fill="#dcdcdc" stroke="#54586a" /></svg>
            </CaptionButton>
            <CaptionButton type="button" aria-label="Maximize">
              <svg width="11" height="9" viewBox="0 0 11 9"><rect x=".5" y=".5" width="10" height="8" rx="1" fill="#f4f4f4" stroke="#54586a" /><rect x="3.500" y="3.500" width="4" height="2" fill="#b8c4d6" stroke="#54586a" /></svg>
            </CaptionButton>
            <CaptionButton type="button" aria-label="Close"><CloseGlyph edge="#54586a" /></CaptionButton>
          </CaptionButtons>
        </TitleBar>
        <Client>
          <Workspace>
            <Sidebar aria-label="Options">
              <Tree>
                {tree.map(([icon, label, level]) => (
                  <TreeItem key={label} $level={level}>
                    <TreeLink href="#" $selected={label === 'Language Management'} aria-current={label === 'Language Management' ? 'page' : undefined}>
                      {icons[icon]}
                      <span>{label}</span>
                    </TreeLink>
                  </TreeItem>
                ))}
              </Tree>
            </Sidebar>
            <Main>
              <Group>
                <Legend>Language</Legend>
                <Intro>
                  <Globe size={32} />
                  <IntroText>Manage languages that can be used in projects:</IntroText>
                </Intro>
                <LanguageTable />
              </Group>
              <Actions>
                <Button type="button" $small>Add</Button>
                <Button type="button" $small>Edit</Button>
                <Button type="button" $small>Delete</Button>
              </Actions>
            </Main>
          </Workspace>
          <Footer>
            <Button type="button" $primary>OK</Button>
            <Button type="button">Cancel</Button>
          </Footer>
        </Client>
      </Window>
      <AddLanguageDialog />
    </>
  );
}
